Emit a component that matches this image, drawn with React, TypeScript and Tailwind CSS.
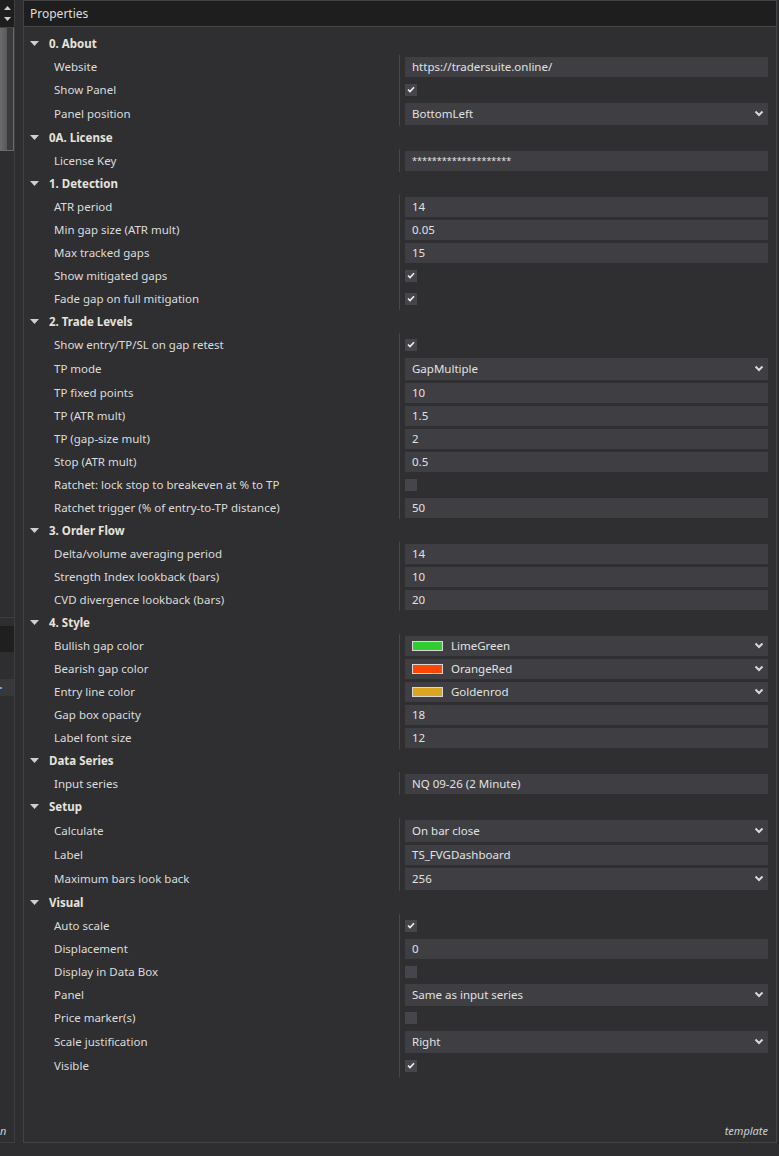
import type { ReactNode } from "react";

type Row = {
  label: string;
  kind: "text" | "check" | "dd" | "color";
  value?: string;
  checked?: boolean;
  swatch?: string;
  compact?: boolean;
};

type Category = { title: string; rows: Row[] };

const categories: Category[] = [
  {
    title: "0. About",
    rows: [
      { label: "Website", kind: "text", value: "https://tradersuite.online/" },
      { label: "Show Panel", kind: "check", checked: true },
      { label: "Panel position", kind: "dd", value: "BottomLeft" },
    ],
  },
  {
    title: "0A. License",
    rows: [{ label: "License Key", kind: "text", value: "********************" }],
  },
  {
    title: "1. Detection",
    rows: [
      { label: "ATR period", kind: "text", value: "14" },
      { label: "Min gap size (ATR mult)", kind: "text", value: "0.05" },
      { label: "Max tracked gaps", kind: "text", value: "15" },
      { label: "Show mitigated gaps", kind: "check", checked: true },
      { label: "Fade gap on full mitigation", kind: "check", checked: true },
    ],
  },
  {
    title: "2. Trade Levels",
    rows: [
      { label: "Show entry/TP/SL on gap retest", kind: "check", checked: true },
      { label: "TP mode", kind: "dd", value: "GapMultiple" },
      { label: "TP fixed points", kind: "text", value: "10" },
      { label: "TP (ATR mult)", kind: "text", value: "1.5" },
      { label: "TP (gap-size mult)", kind: "text", value: "2" },
      { label: "Stop (ATR mult)", kind: "text", value: "0.5" },
      { label: "Ratchet: lock stop to breakeven at % to TP", kind: "check", checked: false },
      { label: "Ratchet trigger (% of entry-to-TP distance)", kind: "text", value: "50" },
    ],
  },
  {
    title: "3. Order Flow",
    rows: [
      { label: "Delta/volume averaging period", kind: "text", value: "14" },
      { label: "Strength Index lookback (bars)", kind: "text", value: "10" },
      { label: "CVD divergence lookback (bars)", kind: "text", value: "20" },
    ],
  },
  {
    title: "4. Style",
    rows: [
      { label: "Bullish gap color", kind: "color", value: "LimeGreen", swatch: "#32cd32" },
      { label: "Bearish gap color", kind: "color", value: "OrangeRed", swatch: "#ff4500" },
      { label: "Entry line color", kind: "color", value: "Goldenrod", swatch: "#daa520" },
      { label: "Gap box opacity", kind: "text", value: "18" },
      { label: "Label font size", kind: "text", value: "12" },
    ],
  },
  {
    title: "Data Series",
    rows: [{ label: "Input series", kind: "text", value: "NQ 09-26 (2 Minute)" }],
  },
  {
    title: "Setup",
    rows: [
      { label: "Calculate", kind: "dd", value: "On bar close" },
      { label: "Label", kind: "text", value: "TS_FVGDashboard" },
      { label: "Maximum bars look back", kind: "dd", value: "256" },
    ],
  },
  {
    title: "Visual",
    rows: [
      { label: "Auto scale", kind: "check", checked: true },
      { label: "Displacement", kind: "text", value: "0" },
      { label: "Display in Data Box", kind: "check", checked: false },
      { label: "Panel", kind: "dd", value: "Same as input series", compact: true },
      { label: "Price marker(s)", kind: "check", checked: false },
      { label: "Scale justification", kind: "dd", value: "Right" },
      { label: "Visible", kind: "check", checked: true },
    ],
  },
];

function Chevron() {
  return (
    <svg width="10" height="7" viewBox="0 0 10 7" className="shrink-0">
      <polyline points="1.5,1.5 5,5 8.5,1.5" fill="none" stroke="#d8d8d8" strokeWidth="2" />
    </svg>
  );
}

function CheckBox({ checked }: { checked?: boolean }) {
  return (
    <div className="flex h-[12px] w-[12px] items-center justify-center bg-[#45454b]">
      {checked ? (
        <svg width="8" height="7" viewBox="0 0 8 7">
          <polyline points="1,3.5 3,5.5 7,1.2" fill="none" stroke="#f0f0f0" strokeWidth="1.6" />
        </svg>
      ) : null}
    </div>
  );
}

function ValueBox({ children, tall }: { children: ReactNode; tall?: boolean }) {
  return (
    <div
      className={`flex w-full items-center justify-between bg-[#3e3e43] pl-[7px] pr-[4px] ${
        tall ? "h-[22px]" : "h-[20px]"
      }`}
    >
      {children}
    </div>
  );
}

function PropertyRow({ row }: { row: Row }) {
  const height = row.kind === "dd" && !row.compact ? "h-[25px]" : "h-[23px]";
  let value: ReactNode = null;

  if (row.kind === "check") {
    value = <CheckBox checked={row.checked} />;
  } else if (row.kind === "text") {
    value = (
      <ValueBox>
        <span className={row.value?.startsWith("*") ? "text-[9px]" : ""}>{row.value}</span>
      </ValueBox>
    );
  } else if (row.kind === "dd") {
    value = (
      <ValueBox tall>
        <span>{row.value}</span>
        <Chevron />
      </ValueBox>
    );
  } else {
    value = (
      <ValueBox>
        <span className="flex items-center">
          <span
            className="mr-[8px] h-[10px] w-[31px] border border-[#d8d8d8]"
            style={{ backgroundColor: row.swatch }}
          />
          {row.value}
        </span>
        <Chevron />
      </ValueBox>
    );
  }

  return (
    <div className={`flex ${height}`}>
      <div className="flex w-[375px] items-center pl-[30px] text-[#dcdcdc]">{row.label}</div>
      <div className="flex flex-1 items-center border-l border-[#48484c] pl-[5px] pr-[8px] text-[#e2e2e2]">
        {value}
      </div>
    </div>
  );
}

function CategoryBlock({ cat }: { cat: Category }) {
  return (
    <div>
      <div className="flex h-[23px] items-center pl-[6px]">
        <svg width="9" height="5" viewBox="0 0 9 5" className="mr-[10px]">
          <polygon points="0,0 9,0 4.5,5" fill="#cfcfcf" />
        </svg>
        <span className="font-bold text-[#e6e3dc]">{cat.title}</span>
      </div>
      {cat.rows.map((row) => (
        <PropertyRow key={row.label} row={row} />
      ))}
    </div>
  );
}

function LeftStrip() {
  return (
    <div className="flex h-[1143px] w-[15px] flex-col border-r border-b border-[#3e3e40]">
      <div className="flex h-[28px] flex-col items-center justify-center gap-[7px] bg-[#1e1e1e] border-b border-[#444]">
        <svg width="7" height="4" viewBox="0 0 7 4">
          <polygon points="0,4 7,4 3.5,0" fill="#cfcfcf" />
        </svg>
        <svg width="7" height="4" viewBox="0 0 7 4">
          <polygon points="0,0 7,0 3.5,4" fill="#cfcfcf" />
        </svg>
      </div>
      <div className="flex h-[123px] border-r border-b border-[#6a6a6a]">
        <div className="w-[7px] bg-gradient-to-r from-[#6c6c6c] to-[#595959]" />
        <div className="flex-1 bg-[#3a3a3c]" />
      </div>
      <div className="h-[467px] border-b border-[#3e3e40]" />
      <div className="mt-[8px] h-[26px] bg-[#1f1f1f]" />
      <div className="mt-[27px] flex h-[17px] items-center bg-[#38383b]">
        <div className="h-[2px] w-[2px] bg-[#6aa0e0]" />
      </div>
      <div className="flex flex-1 items-end pb-[6px]">
        <span className="text-[11px] italic leading-none text-[#d0d0d0]">n</span>
      </div>
    </div>
  );
}

export default function App() {
  return (
    <div
      className="flex h-[1156px] w-[779px] bg-[#2e2e30] text-[11.5px] leading-none"
      style={{ fontFamily: '"Noto Sans", "Open Sans", sans-serif' }}
    >
      <LeftStrip />
      <div className="ml-[8px] flex h-[1143px] w-[754px] flex-col border border-[#424244] bg-[#2f2f31]">
        <div className="flex h-[26px] items-center border-b border-[#454547] bg-[#1e1e1e] pl-[6px] text-[12px] text-[#dedede]">
          Properties
        </div>
        <div className="flex-1 pt-[5px]">
          {categories.map((cat) => (
            <CategoryBlock key={cat.title} cat={cat} />
          ))}
        </div>
        <div className="flex justify-end pb-[6px] pr-[8px] text-[11px] italic text-[#d0d0d0]">template</div>
      </div>
    </div>
  );
}
